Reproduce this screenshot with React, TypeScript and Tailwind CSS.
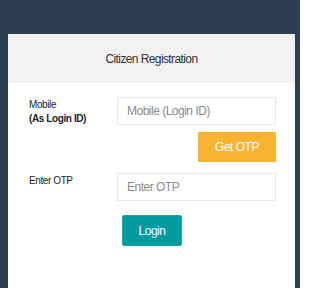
export default function App() {
  return (
    <div className="h-[288px] w-[300px] overflow-hidden bg-[#2c3e50] pt-[34px] pl-[8px] pr-[5px] font-['Liberation_Sans',Arial,sans-serif]">
      <div className="h-full bg-white">
        <div className="flex h-[49px] items-center justify-center bg-[#f2f2f2] text-[12px] tracking-[-0.6px] text-[#333]">
          Citizen Registration
        </div>
        <div className="pt-[14px] pl-[21px] pr-[19px]">
          <div className="flex h-[28px]">
            <div className="w-[88px] pt-[1px] text-[10px] leading-[14px] tracking-[-0.4px] text-[#222]">
              <div>Mobile</div>
              <div className="font-bold">(As Login ID)</div>
            </div>
            <input
              className="h-[28px] w-[159px] border border-[#e8e8e8] px-[9px] text-[12px] tracking-[-0.5px] text-[#555] outline-none placeholder:text-[#8a8a8a]"
              placeholder="Mobile (Login ID)"
            />
          </div>
          <div className="mt-[7px] flex justify-end">
            <button className="h-[30px] w-[78px] bg-[#f8b431] text-[12px] tracking-[-0.5px] text-white">Get OTP</button>
          </div>
          <div className="mt-[11px] flex h-[28px]">
            <div className="w-[88px] pt-[1px] text-[10px] leading-[14px] tracking-[-0.4px] text-[#222]">Enter OTP</div>
            <input
              className="h-[28px] w-[159px] border border-[#e8e8e8] px-[9px] text-[12px] tracking-[-0.5px] text-[#555] outline-none placeholder:text-[#8a8a8a]"
              placeholder="Enter OTP"
            />
          </div>
          <div className="mt-[14px] pl-[93px]">
            <button className="h-[31px] w-[60px] rounded-[2px] border border-[#1aa5ad] bg-[#009aa3] text-[12px] tracking-[-0.5px] text-white">
              Login
            </button>
          </div>
        </div>
      </div>
    </div>
  );
}
